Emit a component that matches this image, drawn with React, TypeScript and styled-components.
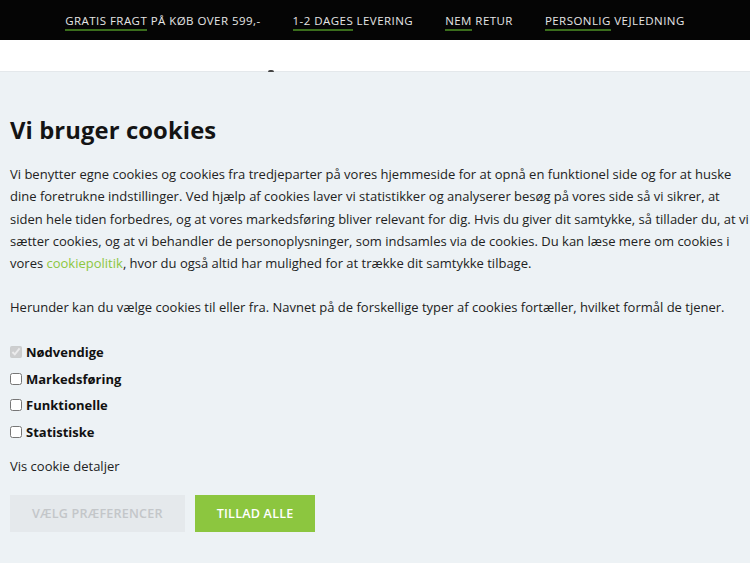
import React, { useState } from 'react';
import styled, { createGlobalStyle } from 'styled-components';

const GlobalStyle = createGlobalStyle`
  html, body {
    margin: 0;
    padding: 0;
    background: #edf2f5;
    overflow: hidden;
  }
  body {
    font-family: 'Open Sans', 'DejaVu Sans', Arial, sans-serif;
    color: #1a1a1a;
  }
`;

const TopBar = styled.div`
  height: 40px;
  background: #050505;
  display: flex;
  align-items: center;
  justify-content: center;
  gap: 32px;
`;

const Usp = styled.span`
  font-size: 11.5px;
  letter-spacing: 0.45px;
  color: #e6e6e6;
  text-transform: uppercase;
  white-space: nowrap;
`;

const Mark = styled.span`
  border-bottom: 2px solid #3a6d1c;
  padding-bottom: 1px;
`;

const HeaderSpace = styled.div`
  position: relative;
  height: 31px;
  background: #ffffff;

  &::after {
    content: '';
    position: absolute;
    left: 268px;
    bottom: -1px;
    width: 6px;
    height: 2px;
    border-radius: 2px 2px 0 0;
    background: #444;
  }
`;

const Panel = styled.section`
  background: #edf2f5;
  border-top: 1px solid #e4e8eb;
  box-shadow: 0 -2px 3px rgba(0, 0, 0, 0.04);
  padding: 24px 2px 29px 10px;
  height: 492px;
  box-sizing: border-box;
`;

const Title = styled.h2`
  margin: 18px 0 17px;
  font-size: 23.8px;
  font-weight: 700;
  color: #141414;
  letter-spacing: 0.1px;
`;

const Text = styled.p`
  margin: 0 0 22px;
  font-size: 13px;
  line-height: 22.3px;
  color: #222;
  white-space: nowrap;
`;

const Link = styled.a`
  color: #8cc63f;
  text-decoration: none;
`;

const Options = styled.div`
  display: flex;
  flex-direction: column;
  gap: 8px;
  margin-top: 24px;
`;

const Option = styled.label`
  display: flex;
  align-items: center;
  gap: 4px;
  font-size: 13px;
  font-weight: 700;
  color: #111;
  height: 18.5px;
`;

const Box = styled.input`
  width: 12px;
  height: 12px;
  margin: 0;
  accent-color: #bcbcbc;
`;

const Details = styled.div`
  margin-top: 16px;
  font-size: 13px;
  color: #222;
`;

const Buttons = styled.div`
  display: flex;
  gap: 10px;
  margin-top: 20px;
`;

const Button = styled.button<{ $primary?: boolean }>`
  height: 37px;
  padding: 0 22px;
  border: none;
  font-family: inherit;
  font-size: 12.6px;
  font-weight: 600;
  text-transform: uppercase;
  letter-spacing: 0.2px;
  cursor: pointer;
  background: ${(p) => (p.$primary ? '#8cc63f' : '#e5e9ec')};
  color: ${(p) => (p.$primary ? '#ffffff' : '#c3c6c9')};
`;

const options = [
  { label: 'Nødvendige', locked: true },
  { label: 'Markedsføring', locked: false },
  { label: 'Funktionelle', locked: false },
  { label: 'Statistiske', locked: false },
];

const App: React.FC = () => {
  const [checked, setChecked] = useState<Record<string, boolean>>({ Nødvendige: true });

  return (
    <>
      <GlobalStyle />
      <TopBar>
        <Usp><Mark>Gratis fragt</Mark> på køb over 599,-</Usp>
        <Usp><Mark>1-2 dages</Mark> levering</Usp>
        <Usp><Mark>Nem</Mark> retur</Usp>
        <Usp><Mark>Personlig</Mark> vejledning</Usp>
      </TopBar>
      <HeaderSpace />
      <Panel>
        <Title>Vi bruger cookies</Title>
        <Text>
          Vi benytter egne cookies og cookies fra tredjeparter på vores hjemmeside for at opnå en funktionel side og for at huske
          <br />
          dine foretrukne indstillinger. Ved hjælp af cookies laver vi statistikker og analyserer besøg på vores side så vi sikrer, at
          <br />
          siden hele tiden forbedres, og at vores markedsføring bliver relevant for dig. Hvis du giver dit samtykke, så tillader du, at vi
          <br />
          sætter cookies, og at vi behandler de personoplysninger, som indsamles via de cookies. Du kan læse mere om cookies i
          <br />
          vores <Link href="#">cookiepolitik</Link>, hvor du også altid har mulighed for at trække dit samtykke tilbage.
        </Text>
        <Text>
          Herunder kan du vælge cookies til eller fra. Navnet på de forskellige typer af cookies fortæller, hvilket formål de tjener.
        </Text>
        <Options>
          {options.map((o) => (
            <Option key={o.label}>
              <Box
                type="checkbox"
                disabled={o.locked}
                checked={!!checked[o.label]}
                onChange={(e) => setChecked({ ...checked, [o.label]: e.target.checked })}
              />
              {o.label}
            </Option>
          ))}
        </Options>
        <Details>Vis cookie detaljer</Details>
        <Buttons>
          <Button>Vælg præferencer</Button>
          <Button $primary>Tillad alle</Button>
        </Buttons>
      </Panel>
    </>
  );
};

export default App;
